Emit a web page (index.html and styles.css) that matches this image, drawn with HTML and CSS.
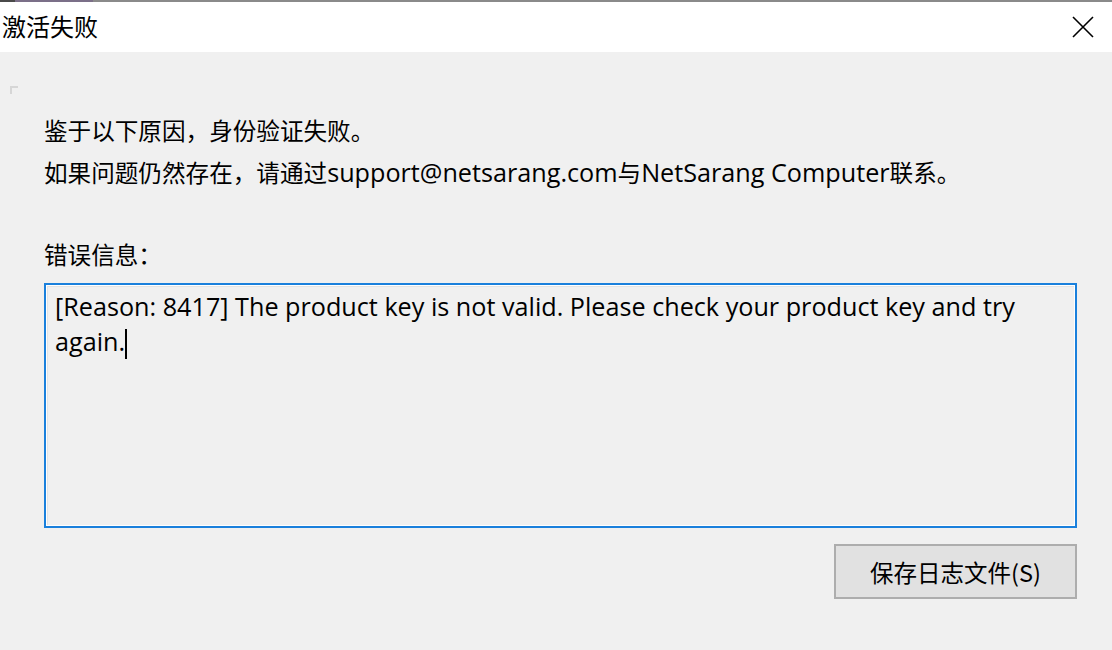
FILE: index.html
```html
<!DOCTYPE html>
<html lang="zh-CN">
<head>
<meta charset="utf-8">
<title>激活失败</title>
<link rel="stylesheet" href="styles.css">
</head>
<body>
<div class="window">
  <div class="topline"></div>
  <div class="titlebar">
    <div class="title">激活失败</div>
    <div class="close" aria-label="关闭">
      <svg width="22" height="22" viewBox="0 0 22 22"><path d="M1 1 L21 21 M21 1 L1 21" stroke="#000" stroke-width="1.6" fill="none"/></svg>
    </div>
  </div>
  <div class="body">
    <div class="corner"></div>
    <div class="content">
      <p class="line">鉴于以下原因，身份验证失败。</p>
      <p class="line">如果问题仍然存在，请通过<span class="lat">support@netsarang.com</span>与<span class="lat">NetSarang Computer</span>联系。</p>
      <p class="label">错误信息：</p>
      <div class="textbox">
        <div class="inner">[Reason: 8417] The product key is not valid. Please check your product key and try again.<span class="caret"></span></div>
      </div>
      <div class="actions">
        <button class="btn">保存日志文件(S)</button>
      </div>
    </div>
  </div>
</div>
</body>
</html>
```

FILE: styles.css
```css
* { box-sizing: border-box; }
html, body {
  margin: 0;
  padding: 0;
  width: 1112px;
  height: 650px;
  overflow: hidden;
  background: #f0f0f0;
  font-family: "Open Sans", "Noto Sans CJK SC", sans-serif;
  color: #000;
}
.window { width: 1112px; height: 650px; display: flex; flex-direction: column; }
.topline {
  height: 2px;
  background: linear-gradient(to right, #4a4a4a 0, #4a4a4a 15px, #7b6f88 15px, #7b6f88 93px, #8a8a8a 93px);
}
.titlebar {
  height: 50px;
  background: #fff;
  display: flex;
  align-items: center;
  justify-content: space-between;
}
.title {
  padding-left: 2px;
  font-family: "Noto Sans CJK SC", sans-serif;
  font-size: 24px;
  line-height: 1;
  margin-top: -2px;
}
.close {
  width: 22px;
  height: 22px;
  margin-right: 18px;
  display: flex;
}
.body { flex: 1; position: relative; }
.corner {
  position: absolute;
  left: 10px;
  top: 34px;
  width: 8px;
  height: 8px;
  border-left: 2px solid #d6d6d6;
  border-top: 2px solid #d6d6d6;
}
.content { padding: 57px 35px 0 44px; }
.line {
  margin: 0;
  font-size: 23.6px;
  line-height: 42px;
  font-family: "Noto Sans CJK SC", sans-serif;
}
.lat { font-family: "Open Sans", sans-serif; font-size: 25.2px; }
.label {
  margin: 40px 0 0;
  font-size: 23.6px;
  line-height: 42px;
  font-family: "Noto Sans CJK SC", sans-serif;
}
.textbox {
  margin-top: 8px;
  height: 245px;
  border: 2px solid #1a80dc;
  background: #fff;
  padding: 1px;
}
.inner {
  height: 100%;
  border-top: 1px solid #e3e3e3;
  border-left: 1px solid #e3e3e3;
  background: #f0f0f0;
  padding: 2px 40px 0 7px;
  font-family: "Open Sans", sans-serif;
  font-size: 25.2px;
  line-height: 35px;
}
.caret {
  display: inline-block;
  width: 2px;
  height: 30px;
  background: #000;
  vertical-align: -8px;
}
.actions { display: flex; justify-content: flex-end; margin-top: 16px; }
.btn {
  width: 243px;
  height: 55px;
  background: #e1e1e1;
  border: 2px solid #adadad;
  font-family: "Noto Sans CJK SC", sans-serif;
  font-size: 23.5px;
  color: #000;
  padding: 0;
}
```
